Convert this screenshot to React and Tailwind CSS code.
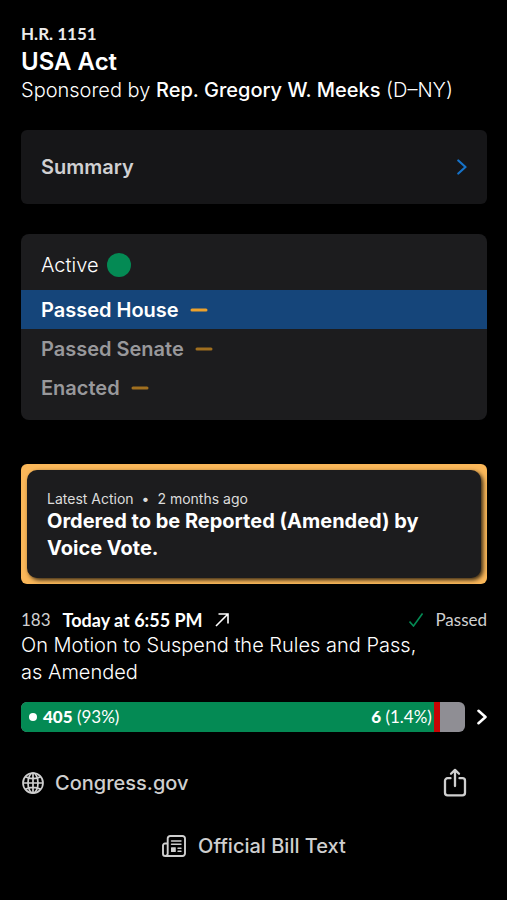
import React from 'react';
import { Minus } from 'lucide-react';

const stages = [
  { id: 'house', label: 'Passed House', current: true },
  { id: 'senate', label: 'Passed Senate', current: false },
  { id: 'enacted', label: 'Enacted', current: false },
];

const vote = { yea: 93, nay: 1.4 };

const GlobeIcon = () => (
  <svg viewBox="0 0 24 24" className="size-6" fill="none" stroke="currentColor" strokeWidth="1.7" aria-hidden="true">
    <circle cx="12" cy="12" r="10" />
    <ellipse cx="12" cy="12" rx="5" ry="10" />
    <path d="M12 2v20M2 12h20M4.400 5.800c4.200 2.400 11 2.400 15.200 0M4.400 18.200c4.200-2.400 11-2.400 15.200 0" />
  </svg>
);

const ShareIcon = () => (
  <svg viewBox="0 0 24 30" className="h-[30px] w-6" fill="none" stroke="currentColor" strokeWidth="2.3" strokeLinecap="round" strokeLinejoin="round" aria-hidden="true">
    <path d="M7.500 10.200H4.600a2.600 2.600 0 0 0-2.600 2.600v12a2.600 2.600 0 0 0 2.600 2.600h14.800a2.600 2.600 0 0 0 2.600-2.600v-12a2.600 2.600 0 0 0-2.600-2.600h-2.900" />
    <path d="M12 18V2.400M8 5.800 12 1.900l4 3.900" />
  </svg>
);

const NewspaperIcon = () => (
  <svg viewBox="0 0 24 22" className="h-[22px] w-6" fill="none" stroke="currentColor" strokeWidth="1.9" strokeLinecap="round" strokeLinejoin="round" aria-hidden="true">
    <path d="M5.700 18.500V3.500A2.500 2.500 0 0 1 8.200 1H20.500A2.500 2.500 0 0 1 23 3.500v15A2.500 2.500 0 0 1 20.500 21H3.300A2.300 2.300 0 0 1 1 18.700V10.500A2 2 0 0 1 3 8.500h2.700M5.700 18.500A2.400 2.400 0 0 1 3.300 21" />
    <path d="M9.500 6h9.500M9.500 9.300h9.500M16 13.200h3M16 16.300h3" strokeWidth="1.4" />
    <rect x="9" y="12.300" width="4.800" height="4.800" rx="0.500" fill="currentColor" stroke="none" />
  </svg>
);

const BillHeader = () => (
  <header>
    <p className="font-['Lato',sans-serif] text-[17px] leading-5 font-bold text-[#ececec]">H.R. 1151</p>
    <h1 className="mt-1 text-2xl leading-7 font-semibold">USA Act</h1>
    <p className="text-xl leading-7 font-light">
      Sponsored by <span className="font-medium">Rep. Gregory W. Meeks</span> (D–NY)
    </p>
  </header>
);

const StatusCard = () => (
  <section className="mt-[30px] rounded-lg bg-[#1c1c1e] pt-1.5 pb-[13px]">
    <div className="flex h-[50px] items-center gap-2 px-5">
      <span className="text-xl font-light">Active</span>
      <span className="size-6 rounded-full bg-[#048a54]" />
    </div>
    <ul>
      {stages.map((stage) => (
        <li
          key={stage.id}
          className={
            stage.current
              ? 'flex h-[39px] items-center gap-2 bg-[#15457a] px-5 text-xl font-semibold text-white'
              : 'flex h-[39px] items-center gap-2 px-5 text-xl font-semibold text-[#98989b]'
          }
        >
          {stage.label}
          <Minus className={stage.current ? 'size-6 text-[#eca12c]' : 'size-6 text-[#a06f1f]'} strokeWidth={3} />
        </li>
      ))}
    </ul>
  </section>
);

const LatestAction = () => (
  <section className="mt-11 rounded-md bg-[#fab759] p-1.5">
    <div className="rounded-[10px] bg-[#1c1c1e] px-5 pt-5 pb-4 shadow-[2px_2px_4px_rgba(0,0,0,0.8)]">
      <p className="flex gap-2 text-sm leading-[18px] text-[#dcdcdc]">
        <span>Latest Action</span>
        <span>•</span>
        <span>2 months ago</span>
      </p>
      <p className="text-xl leading-[27px] font-bold">Ordered to be Reported (Amended) by Voice Vote.</p>
    </div>
  </section>
);

const VoteBar = () => (
  <button type="button" className="mt-4 flex w-full items-center justify-between font-['Lato',sans-serif] text-[17px]" aria-label="Vote details">
    <span className="mr-3 flex h-[30px] flex-1 overflow-hidden rounded-md bg-[#8f8e94]">
      <span className="flex items-center justify-between bg-[#048a54] pr-0.5 pl-2" style={{ width: `${vote.yea}%` }}>
        <span className="flex items-center gap-1.5">
          <span className="size-2 rounded-full bg-white" />
          <span><b className="font-black">405</b> (93%)</span>
        </span>
        <span><b className="font-black">6</b> (1.4%)</span>
      </span>
      <span className="bg-[#c80404]" style={{ width: `${vote.nay}%` }} />
    </span>
    <svg viewBox="0 0 10 16" className="h-4 w-2.5" fill="none" stroke="currentColor" strokeWidth="2.6" strokeLinecap="round" strokeLinejoin="round" aria-hidden="true">
      <path d="m1.500 1.800 7 6.200-7 6.200" />
    </svg>
  </button>
);

const VoteSection = () => (
  <section className="mt-6">
    <div className="flex h-6 items-center justify-between font-['Lato',sans-serif] text-[17px]">
      <p className="flex items-center gap-3">
        <span className="text-[#d0d0d0]">183</span>
        <span className="text-lg font-bold">Today at 6:55 PM</span>
        <svg viewBox="0 0 14 14" className="size-3.5" fill="none" stroke="currentColor" strokeWidth="1.6" aria-hidden="true">
          <path d="M1 13 12.700 1.300M3.500 1H13v9.500" />
        </svg>
      </p>
      <p className="flex items-center gap-3 text-[#d0d0d0]">
        <svg viewBox="0 0 14 14" className="size-3.5 text-[#048a54]" fill="none" stroke="currentColor" strokeWidth="1.6" aria-hidden="true">
          <path d="m0.500 8.500 4 4.500L13.500 0.500" />
        </svg>
        Passed
      </p>
    </div>
    <p className="pr-14 text-xl leading-[27px] font-light">On Motion to Suspend the Rules and Pass, as Amended</p>
    <VoteBar />
  </section>
);

const App = () => {
  return (
    <main className="min-h-screen bg-black pt-6 pr-5 pb-8 pl-[21px] font-['Inter',sans-serif] text-white">
      <BillHeader />
      <button type="button" className="mt-[26px] flex h-[74px] w-full items-center justify-between rounded-md bg-[#161618] px-5 text-xl font-semibold text-[#d0d0d2]">
        Summary
        <svg viewBox="0 0 10 16" className="h-4 w-2.5 text-[#1672c8]" fill="none" stroke="currentColor" strokeWidth="2.2" strokeLinecap="round" strokeLinejoin="round" aria-hidden="true">
          <path d="m1.300 1.500 7.200 6.500-7.200 6.500" />
        </svg>
      </button>
      <StatusCard />
      <LatestAction />
      <VoteSection />
      <div className="mt-9 flex items-center justify-between pr-5 text-[#cfcfcf]">
        <a href="#congress" className="flex items-center gap-2.5 text-xl font-medium">
          <GlobeIcon />
          Congress.gov
        </a>
        <button type="button" aria-label="Share">
          <ShareIcon />
        </button>
      </div>
      <a href="#text" className="mt-[34px] flex items-center justify-center gap-3 text-xl font-medium text-[#cfcfcf]">
        <NewspaperIcon />
        Official Bill Text
      </a>
    </main>
  );
};

export default App;
